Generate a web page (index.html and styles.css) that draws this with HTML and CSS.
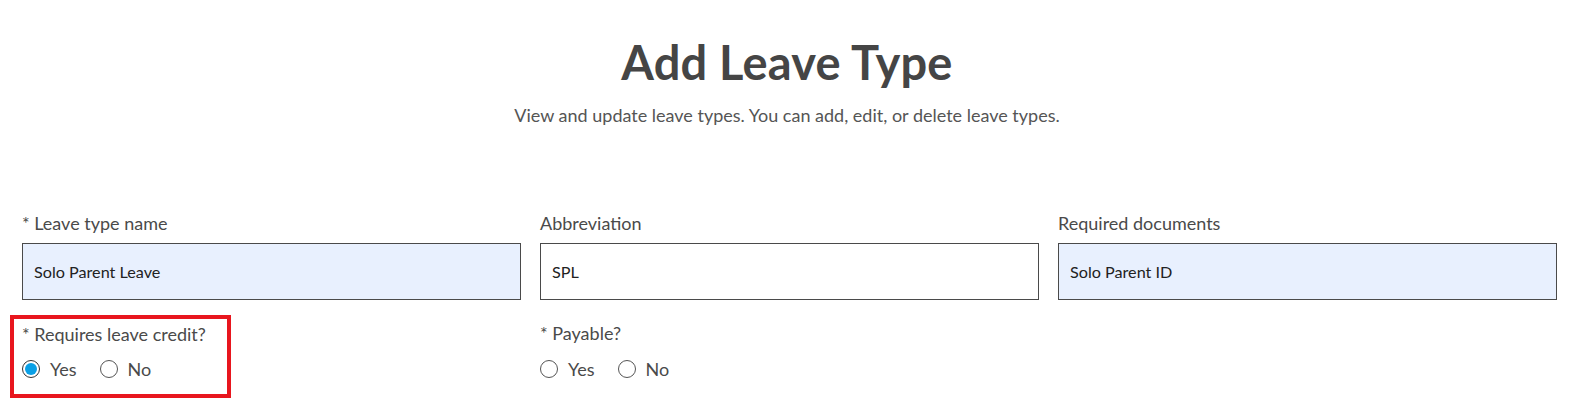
FILE: index.html
```html
<!DOCTYPE html>
<html lang="en">
<head>
<meta charset="utf-8">
<title>Add Leave Type</title>
<link rel="stylesheet" href="styles.css">
</head>
<body>
<div class="page">
  <header class="head">
    <h1 class="title">Add Leave Type</h1>
    <p class="subtitle">View and update leave types. You can add, edit, or delete leave types.</p>
  </header>
  <form class="form">
    <div class="field">
      <label class="label">* Leave type name</label>
      <div class="input filled">Solo Parent Leave</div>
    </div>
    <div class="field">
      <label class="label">Abbreviation</label>
      <div class="input">SPL</div>
    </div>
    <div class="field">
      <label class="label">Required documents</label>
      <div class="input filled">Solo Parent ID</div>
    </div>
    <div class="group highlight">
      <div class="label">* Requires leave credit?</div>
      <div class="radios">
        <span class="radio checked"></span><span class="rlabel">Yes</span>
        <span class="radio"></span><span class="rlabel">No</span>
      </div>
    </div>
    <div class="group">
      <div class="label">* Payable?</div>
      <div class="radios">
        <span class="radio"></span><span class="rlabel">Yes</span>
        <span class="radio"></span><span class="rlabel">No</span>
      </div>
    </div>
  </form>
</div>
</body>
</html>
```
FILE: styles.css
```css
* { box-sizing: border-box; }
html, body { margin: 0; padding: 0; background: #fff; }
body { font-family: "Lato", "Open Sans", sans-serif; color: #444; }
.page { width: 1574px; }
.head { text-align: center; padding-top: 34px; }
.title { margin: 0; font-size: 47px; font-weight: 700; color: #454545; line-height: 56px; letter-spacing: 0.2px; }
.subtitle { margin: 15px 0 0; font-size: 18px; color: #555; line-height: 20px; }
.form {
  display: grid;
  grid-template-columns: repeat(3, 499px);
  column-gap: 19px;
  padding: 88px 0 0 22px;
}
.field { display: flex; flex-direction: column; }
.label { font-size: 18px; color: #4a4a4a; line-height: 20px; }
.field .label { margin-bottom: 10px; }
.input {
  height: 57px;
  border: 1px solid #4a4a4a;
  padding: 0 11px;
  display: flex;
  align-items: center;
  font-size: 16.2px;
  color: #222;
  background: #fff;
}
.input.filled { background: #e8f0fe; }
.group { padding-top: 23px; }
.group .label { margin-bottom: 16px; }
.highlight {
  justify-self: start;
  width: 221px;
  margin: 15px 0 0 -12px;
  border: 4px solid #e8161e;
  padding: 5px 0 15px 8px;
}
.highlight .label { margin-bottom: 15px; }
.radios { display: flex; align-items: center; }
.radio {
  width: 18px; height: 18px;
  border: 1px solid #555;
  border-radius: 50%;
  background: #fff;
  position: relative;
  flex: none;
}
.radio.checked { border-color: #333; }
.radio.checked::after {
  content: "";
  position: absolute;
  left: 2px; top: 2px; right: 2px; bottom: 2px;
  border-radius: 50%;
  background: #0aa0e6;
}
.rlabel { font-size: 18px; color: #4a4a4a; margin-left: 10px; margin-right: 23px; line-height: 20px; }
```
